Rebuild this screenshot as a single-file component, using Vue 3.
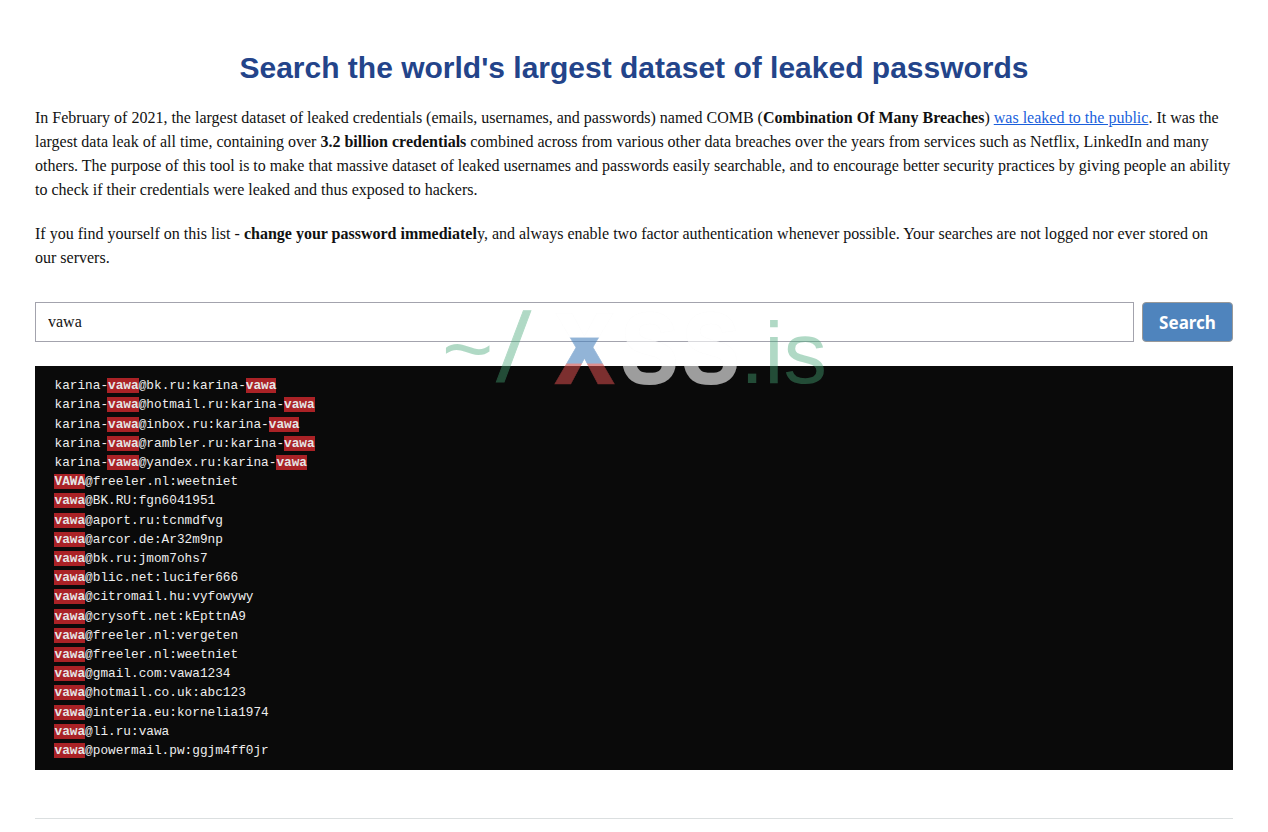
<script setup>
const rows = [
  ['karina-', ['vawa'], '@bk.ru:karina-', ['vawa']],
  ['karina-', ['vawa'], '@hotmail.ru:karina-', ['vawa']],
  ['karina-', ['vawa'], '@inbox.ru:karina-', ['vawa']],
  ['karina-', ['vawa'], '@rambler.ru:karina-', ['vawa']],
  ['karina-', ['vawa'], '@yandex.ru:karina-', ['vawa']],
  [['VAWA'], '@freeler.nl:weetniet'],
  [['vawa'], '@BK.RU:fgn6041951'],
  [['vawa'], '@aport.ru:tcnmdfvg'],
  [['vawa'], '@arcor.de:Ar32m9np'],
  [['vawa'], '@bk.ru:jmom7ohs7'],
  [['vawa'], '@blic.net:lucifer666'],
  [['vawa'], '@citromail.hu:vyfowywy'],
  [['vawa'], '@crysoft.net:kEpttnA9'],
  [['vawa'], '@freeler.nl:vergeten'],
  [['vawa'], '@freeler.nl:weetniet'],
  [['vawa'], '@gmail.com:vawa1234'],
  [['vawa'], '@hotmail.co.uk:abc123'],
  [['vawa'], '@interia.eu:kornelia1974'],
  [['vawa'], '@li.ru:vawa'],
  [['vawa'], '@powermail.pw:ggjm4ff0jr'],
]
</script>

<template>
  <div class="page">
    <h1 class="title">Search the world's largest dataset of leaked passwords</h1>
    <p class="para">In February of 2021, the largest dataset of leaked credentials (emails, usernames, and passwords) named COMB (<b>Combination Of Many Breaches</b>) <a href="#" class="link">was leaked to the public</a>. It was the largest data leak of all time, containing over <b>3.2 billion credentials</b> combined across from various other data breaches over the years from services such as Netflix, LinkedIn and many others. The purpose of this tool is to make that massive dataset of leaked usernames and passwords easily searchable, and to encourage better security practices by giving people an ability to check if their credentials were leaked and thus exposed to hackers.</p>
    <p class="para">If you find yourself on this list - <b>change your password immediatel</b>y, and always enable two factor authentication whenever possible. Your searches are not logged nor ever stored on our servers.</p>
    <form class="search" @submit.prevent>
      <input class="field" type="text" value="vawa" />
      <button class="btn" type="submit">Search</button>
    </form>
    <div class="results">
      <div v-for="(row, i) in rows" :key="i" class="row"><template v-for="(part, j) in row" :key="j"><mark v-if="Array.isArray(part)" class="hit">{{ part[0] }}</mark><template v-else>{{ part }}</template></template></div>
    </div>
    <hr class="rule" />
    <div class="watermark">
      <span class="wm-tilde">~</span>
      <span class="wm-slash">/</span>
      <span class="wm-big wm-x">x</span>
      <span class="wm-big wm-ss">ss</span>
      <span class="wm-dom">.is</span>
    </div>
  </div>
</template>

<style>
html, body { margin: 0; background: #fff; overflow: hidden; }
</style>

<style scoped>
.page {
  position: relative;
  width: 1198px;
  height: 832px;
  padding: 0 35px;
  font-family: "Liberation Serif", serif;
  font-size: 16px;
  line-height: 24px;
  color: #111;
  overflow: hidden;
}
.title {
  margin: 0;
  padding-top: 49px;
  font-family: "Liberation Sans", sans-serif;
  font-size: 30px;
  line-height: 38px;
  font-weight: 700;
  color: #23448a;
  text-align: center;
}
.para { margin: 0 0 20px; }
.title + .para { margin-top: 19px; }
.link { color: #1a5fdc; }
.search { display: flex; gap: 8px; margin-top: 32px; }
.field {
  flex: 1;
  box-sizing: border-box;
  height: 40px;
  padding: 0 12px;
  border: 1px solid #a3a3ad;
  outline: none;
  font-family: "Liberation Serif", serif;
  font-size: 16px;
  color: #111;
}
.btn {
  width: 91px;
  height: 40px;
  border: 1px solid #999;
  border-radius: 4px;
  background: #4f84bd;
  color: #fff;
  font-family: "Noto Sans", sans-serif;
  font-size: 17px;
  font-weight: 700;
  padding: 0;
}
.results {
  margin-top: 24px;
  padding: 10.15px 19.5px 9.85px;
  background: #0a0a0a;
  color: #eee;
  font-family: "Liberation Mono", monospace;
  font-size: 12.75px;
  line-height: 19.2px;
}
.row { white-space: pre; }
.hit { background: #aa2226; color: #e6e6e6; font-weight: 700; }
.hit:first-child { margin-left: -1px; padding-left: 1px; }
.rule { margin: 48px 0 0; border: 0; border-top: 1px solid #dbdfe0; }
.watermark {
  position: absolute;
  left: 443px;
  top: 300px;
  width: 390px;
  height: 90px;
  font-family: "Liberation Sans", sans-serif;
  white-space: pre;
  pointer-events: none;
}
.watermark span { position: absolute; display: block; }
.wm-tilde {
  left: -1px;
  top: -1px;
  font-size: 88px;
  line-height: 100px;
  color: #46a777;
  opacity: .42;
}
.wm-slash {
  left: 57px;
  top: -2px;
  font-size: 97px;
  line-height: 100px;
  color: #46a777;
  opacity: .42;
  transform: skewX(-6deg);
  -webkit-text-stroke: 1px #46a777;
}
.wm-big {
  top: -5px;
  font-size: 110px;
  line-height: 100px;
  font-weight: 700;
  transform: scaleY(1.22);
  transform-origin: 50% 83.8%;
  -webkit-text-stroke: .5px rgba(0, 0, 0, .025);
}
.wm-x {
  left: 111px;
  background: linear-gradient(#fff 0 50%, #4a83bd 50% 71.5%, #c84848 71.5%);
  -webkit-background-clip: text;
  background-clip: text;
  color: transparent;
  opacity: .6;
}
.wm-ss { left: 176px; color: #fff; opacity: .6; }
.wm-dom {
  left: 297px;
  top: 3px;
  font-size: 87px;
  line-height: 100px;
  color: #46a777;
  opacity: .42;
}
</style>
